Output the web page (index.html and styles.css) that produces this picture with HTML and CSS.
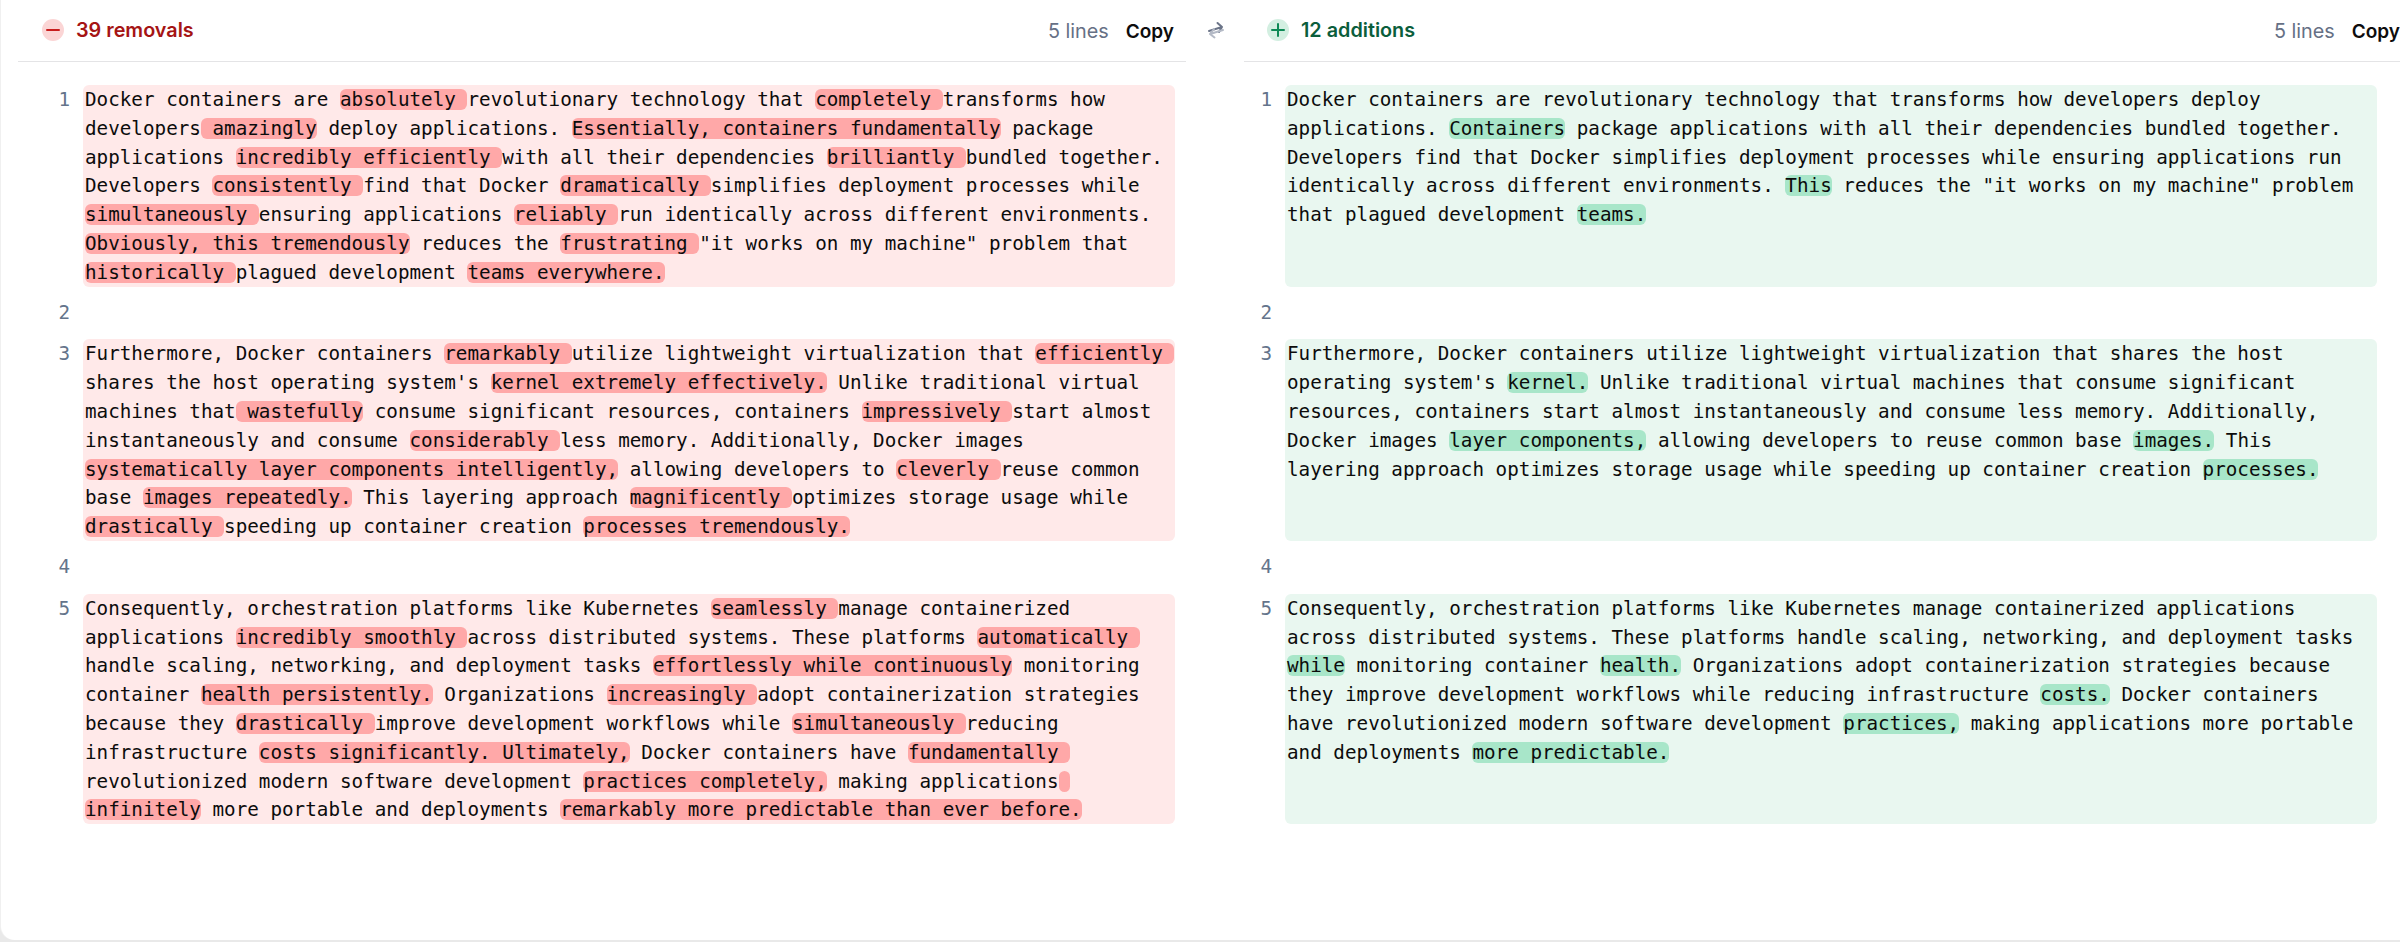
FILE: index.html
```html
<!DOCTYPE html>
<html lang="en">
<head>
<meta charset="utf-8">
<title>Diff</title>
<link rel="stylesheet" href="styles.css">
</head>
<body>
<main class="card">
  <section class="panel panel-del">
    <header class="head">
      <span class="badge badge-del"><svg viewBox="0 0 22 22" width="22" height="22"><path d="M5 11h12" stroke="#c81e1e" stroke-width="2" stroke-linecap="round"/></svg></span>
      <span class="title title-del">39 removals</span>
      <span class="count">5 lines</span>
      <span class="copy">Copy</span>
    </header>
    <div class="rows">
      <div class="row"><span class="num">1</span><div class="text tall7">
        <div class="line">Docker containers are <mark>absolutely </mark>revolutionary technology that <mark>completely </mark>transforms how</div>
        <div class="line">developers<mark> amazingly</mark> deploy applications. <mark>Essentially, containers fundamentally</mark> package</div>
        <div class="line">applications <mark>incredibly efficiently </mark>with all their dependencies <mark>brilliantly </mark>bundled together.</div>
        <div class="line">Developers <mark>consistently </mark>find that Docker <mark>dramatically </mark>simplifies deployment processes while</div>
        <div class="line"><mark>simultaneously </mark>ensuring applications <mark>reliably </mark>run identically across different environments.</div>
        <div class="line"><mark>Obviously, this tremendously</mark> reduces the <mark>frustrating </mark>"it works on my machine" problem that</div>
        <div class="line"><mark>historically </mark>plagued development <mark>teams everywhere.</mark></div>
      </div></div>
      <div class="row"><span class="num">2</span><div class="blank"></div></div>
      <div class="row"><span class="num">3</span><div class="text tall7">
        <div class="line">Furthermore, Docker containers <mark>remarkably </mark>utilize lightweight virtualization that <mark>efficiently </mark></div>
        <div class="line">shares the host operating system's <mark>kernel extremely effectively.</mark> Unlike traditional virtual</div>
        <div class="line">machines that<mark> wastefully</mark> consume significant resources, containers <mark>impressively </mark>start almost</div>
        <div class="line">instantaneously and consume <mark>considerably </mark>less memory. Additionally, Docker images</div>
        <div class="line"><mark>systematically layer components intelligently,</mark> allowing developers to <mark>cleverly </mark>reuse common</div>
        <div class="line">base <mark>images repeatedly.</mark> This layering approach <mark>magnificently </mark>optimizes storage usage while</div>
        <div class="line"><mark>drastically </mark>speeding up container creation <mark>processes tremendously.</mark></div>
      </div></div>
      <div class="row"><span class="num">4</span><div class="blank"></div></div>
      <div class="row"><span class="num">5</span><div class="text tall8">
        <div class="line">Consequently, orchestration platforms like Kubernetes <mark>seamlessly </mark>manage containerized</div>
        <div class="line">applications <mark>incredibly smoothly </mark>across distributed systems. These platforms <mark>automatically </mark></div>
        <div class="line">handle scaling, networking, and deployment tasks <mark>effortlessly while continuously</mark> monitoring</div>
        <div class="line">container <mark>health persistently.</mark> Organizations <mark>increasingly </mark>adopt containerization strategies</div>
        <div class="line">because they <mark>drastically </mark>improve development workflows while <mark>simultaneously </mark>reducing</div>
        <div class="line">infrastructure <mark>costs significantly. Ultimately,</mark> Docker containers have <mark>fundamentally </mark></div>
        <div class="line">revolutionized modern software development <mark>practices completely,</mark> making applications<mark> </mark></div>
        <div class="line"><mark>infinitely</mark> more portable and deployments <mark>remarkably more predictable than ever before.</mark></div>
      </div></div>
    </div>
  </section>

  <div class="swap">
    <svg viewBox="0 0 20 18" width="20" height="18" fill="none" stroke-width="2" stroke-linecap="round" stroke-linejoin="round">
      <path d="M3 10 16 6M11.5 2 16 6l-3 5" stroke="#6b7488"/>
      <path d="M17 9 4 13M8 8 4 13 8.5 16.5" stroke="#b4bac6"/>
    </svg>
  </div>

  <section class="panel panel-add">
    <header class="head">
      <span class="badge badge-add"><svg viewBox="0 0 22 22" width="22" height="22"><path d="M5 11h12M11 5v12" stroke="#0d8a55" stroke-width="2" stroke-linecap="round"/></svg></span>
      <span class="title title-add">12 additions</span>
      <span class="count">5 lines</span>
      <span class="copy">Copy</span>
    </header>
    <div class="rows">
      <div class="row"><span class="num">1</span><div class="text tall7">
        <div class="line">Docker containers are revolutionary technology that transforms how developers deploy</div>
        <div class="line">applications. <mark>Containers</mark> package applications with all their dependencies bundled together.</div>
        <div class="line">Developers find that Docker simplifies deployment processes while ensuring applications run</div>
        <div class="line">identically across different environments. <mark>This</mark> reduces the "it works on my machine" problem</div>
        <div class="line">that plagued development <mark>teams.</mark></div>
      </div></div>
      <div class="row"><span class="num">2</span><div class="blank"></div></div>
      <div class="row"><span class="num">3</span><div class="text tall7">
        <div class="line">Furthermore, Docker containers utilize lightweight virtualization that shares the host</div>
        <div class="line">operating system's <mark>kernel.</mark> Unlike traditional virtual machines that consume significant</div>
        <div class="line">resources, containers start almost instantaneously and consume less memory. Additionally,</div>
        <div class="line">Docker images <mark>layer components,</mark> allowing developers to reuse common base <mark>images.</mark> This</div>
        <div class="line">layering approach optimizes storage usage while speeding up container creation <mark>processes.</mark></div>
      </div></div>
      <div class="row"><span class="num">4</span><div class="blank"></div></div>
      <div class="row"><span class="num">5</span><div class="text tall8">
        <div class="line">Consequently, orchestration platforms like Kubernetes manage containerized applications</div>
        <div class="line">across distributed systems. These platforms handle scaling, networking, and deployment tasks</div>
        <div class="line"><mark>while</mark> monitoring container <mark>health.</mark> Organizations adopt containerization strategies because</div>
        <div class="line">they improve development workflows while reducing infrastructure <mark>costs.</mark> Docker containers</div>
        <div class="line">have revolutionized modern software development <mark>practices,</mark> making applications more portable</div>
        <div class="line">and deployments <mark>more predictable.</mark></div>
      </div></div>
    </div>
  </section>
</main>
</body>
</html>
```
FILE: styles.css
```css
* { box-sizing: border-box; }
html, body { margin: 0; height: 100%; background: #e9e9e9; overflow: hidden; }
body { padding: 0 0 2px 1px; }
.card {
  display: flex;
  align-items: flex-start;
  height: 940px;
  width: 2420px;
  padding-left: 17px;
  background: #fff;
  border-bottom-left-radius: 14px;
  box-shadow: -1px 0 0 #f0f0f0;
}
.panel { flex: none; }
.panel-del { width: 1168px; }
.panel-add { width: 1156px; }
.head {
  display: flex;
  align-items: center;
  height: 62px;
  border-bottom: 1px solid #e4e4e6;
  font-family: Inter, "Liberation Sans", sans-serif;
  font-size: 19.8px;
}
.panel-del .head { padding: 0 12px 1px 24px; }
.panel-add .head { padding: 0 0 1px 23px; }
.badge { width: 22px; height: 22px; border-radius: 50%; display: flex; flex: none; }
.badge-del { background: #fbd5d5; }
.badge-add { background: #d3efe1; }
.title { margin-left: 12px; font-weight: 600; flex: 1; }
.title-del { color: #a51414; }
.title-add { color: #0b5e3c; }
.count { color: #667085; padding-top: 1px; }
.copy { margin-left: 17px; font-weight: 600; font-size: 19px; color: #0d0d0d; padding-top: 2px; }
.swap { flex: none; width: 58px; height: 61px; display: flex; justify-content: center; align-items: center; padding: 0 0 1px 1px; }
.rows { display: flex; flex-direction: column; gap: 11.5px; padding-top: 23px; }
.panel-del .rows { padding-left: 40px; }
.panel-add .rows { padding-left: 16px; }
.row {
  display: flex;
  font-family: "DejaVu Sans Mono", monospace;
  font-size: 19.25px;
  line-height: 28.8px;
  color: #0c0c0c;
}
.num { flex: none; width: 12px; margin-right: 13px; padding-top: 1px; text-align: right; color: #64748b; }
.text, .blank { width: 1092px; }
.text { padding: 1px 2px 0; border-radius: 6px; }
.blank { height: 28.8px; }
.tall7 { height: 201.6px; }
.tall8 { height: 230.4px; }
.line { height: 28.8px; white-space: pre; }
mark { display: inline-block; height: 21px; line-height: 21px; color: inherit; border-radius: 6px; }
.panel-del .text { background: #ffe9e9; }
.panel-del mark { background: #ffa8a8; }
.panel-add .text { background: #e9f7f0; }
.panel-add mark { background: #a8e6c9; }
```
